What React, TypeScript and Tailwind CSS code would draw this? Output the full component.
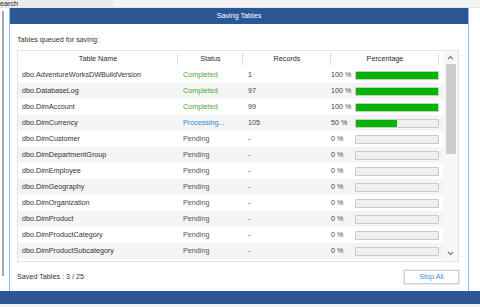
import React from 'react';

type Row = {
    name: string;
    status: 'Completed' | 'Processing...' | 'Pending';
    records: string;
    pct: number;
};

const rows: Row[] = [
    { name: 'dbo.AdventureWorksDWBuildVersion', status: 'Completed', records: '1', pct: 100 },
    { name: 'dbo.DatabaseLog', status: 'Completed', records: '97', pct: 100 },
    { name: 'dbo.DimAccount', status: 'Completed', records: '99', pct: 100 },
    { name: 'dbo.DimCurrency', status: 'Processing...', records: '105', pct: 50 },
    { name: 'dbo.DimCustomer', status: 'Pending', records: '-', pct: 0 },
    { name: 'dbo.DimDepartmentGroup', status: 'Pending', records: '-', pct: 0 },
    { name: 'dbo.DimEmployee', status: 'Pending', records: '-', pct: 0 },
    { name: 'dbo.DimGeography', status: 'Pending', records: '-', pct: 0 },
    { name: 'dbo.DimOrganization', status: 'Pending', records: '-', pct: 0 },
    { name: 'dbo.DimProduct', status: 'Pending', records: '-', pct: 0 },
    { name: 'dbo.DimProductCategory', status: 'Pending', records: '-', pct: 0 },
    { name: 'dbo.DimProductSubcategory', status: 'Pending', records: '-', pct: 0 },
];

const statusColor = (s: Row['status']) =>
    s === 'Completed' ? 'text-[#4da63a]' : s === 'Processing...' ? 'text-[#2f86de]' : 'text-[#555]';

const Chevron = ({ up }: { up?: boolean }) => (
    <svg width="7" height="5" viewBox="0 0 7 5">
        <path d={up ? 'M1 4 L3.5 1.5 L6 4' : 'M1 1 L3.5 3.5 L6 1'} stroke="#777" strokeWidth="1.2" fill="none" />
    </svg>
);

const HeaderCell = ({ w, label }: { w: string; label: string }) => (
    <div className={`${w} flex items-center justify-center relative`}>
        <span>{label}</span>
        <div className="absolute right-0 top-[2px] bottom-[2px] w-px bg-[#dcdcdc]" />
    </div>
);

export default function App() {
    return (
        <div className="w-[480px] h-[307px] bg-white overflow-hidden flex flex-col font-['Liberation_Sans',Arial,sans-serif] text-[7.2px] text-[#333]">
            {/* window behind the dialog */}
            <div className="h-[8px] flex bg-[#f4f4f4] border-b border-[#e6e6e6]">
                <div className="w-[113px] bg-[#ebebeb] leading-[7px] whitespace-nowrap text-[#222]">earch</div>
            </div>

            <div className="h-[283px] flex">
                <div className="w-[9px] pt-[3px] pb-[15px] flex">
                    <div className="ml-[2px] w-[2px] bg-[#a9a9a9]" />
                </div>

                {/* dialog */}
                <div className="w-[460px] flex flex-col bg-white border-x border-[#8db9ee]">
                    <div className="h-[16px] bg-[#2b5797] text-white flex items-center justify-center">
                        Saving Tables
                    </div>

                    <div className="flex-1 flex flex-col px-[7px] pt-[11px]">
                        <div className="h-[10px] leading-[10px]">Tables queued for saving:</div>

                        <div className="mt-[5px] w-[442px] h-[212px] border border-[#e4e4e4] flex overflow-hidden">
                            <div className="flex-1 flex flex-col">
                                <div className="h-[16px] flex shrink-0 text-[#2a2a2a]">
                                    <HeaderCell w="w-[160px]" label="Table Name" />
                                    <HeaderCell w="w-[65px]" label="Status" />
                                    <HeaderCell w="w-[88px]" label="Records" />
                                    <HeaderCell w="w-[108px]" label="Percentage" />
                                </div>
                                <div className="flex-1 flex flex-col">
                                    {rows.map((r, i) => (
                                        <div
                                            key={r.name}
                                            className={`h-[16px] shrink-0 flex items-center ${i % 2 === 1 ? 'bg-[#f4f4f4]' : 'bg-white'}`}
                                        >
                                            <div className="w-[160px] pl-[4px] whitespace-nowrap">{r.name}</div>
                                            <div className={`w-[65px] pl-[5px] ${statusColor(r.status)}`}>{r.status}</div>
                                            <div className="w-[88px] pl-[5px] text-[#444]">{r.records}</div>
                                            <div className="w-[24px] text-[#444]">{r.pct} %</div>
                                            <div className="w-[84px] h-[9px] rounded-[1px] border border-[#c9c9c9] bg-[#efefef] overflow-hidden">
                                                <div className="h-full bg-[#00b400]" style={{ width: `${r.pct}%` }} />
                                            </div>
                                        </div>
                                    ))}
                                </div>
                            </div>

                            {/* scrollbar */}
                            <div className="w-[15px] flex flex-col items-center bg-[#f7f7f7]">
                                <div className="h-[13px] flex items-center justify-center">
                                    <Chevron up />
                                </div>
                                <div className="w-[10px] h-[90px] bg-[#cdcdcd]" />
                                <div className="flex-1" />
                                <div className="h-[12px] flex items-start justify-center pt-[2px]">
                                    <Chevron />
                                </div>
                            </div>
                        </div>

                        <div className="mt-[8px] flex items-center justify-between w-[442px]">
                            <span className="text-[#333]">Saved Tables : 3 / 25</span>
                            <button className="w-[55px] h-[14px] border border-[#cfcfcf] bg-white text-[#3a8ee6] shadow-[0_0_0_1px_#ececec]">
                                Stop All
                            </button>
                        </div>
                    </div>
                </div>

                <div className="flex-1" />
            </div>

            <div className="h-[13px] bg-[#2b5797]" />
            <div className="flex-1 bg-[#f2f2f2]" />
        </div>
    );
}
